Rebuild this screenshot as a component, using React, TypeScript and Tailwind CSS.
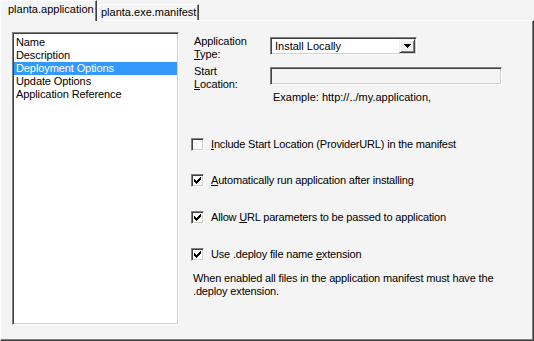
import React from "react";

function Check() {
  return (
    <svg width="7" height="7" viewBox="0 0 7 7" shapeRendering="crispEdges">
      <rect x="6" y="0" width="1" height="3" fill="#000" />
      <rect x="5" y="1" width="1" height="3" fill="#000" />
      <rect x="4" y="2" width="1" height="3" fill="#000" />
      <rect x="3" y="3" width="1" height="3" fill="#000" />
      <rect x="2" y="4" width="1" height="3" fill="#000" />
      <rect x="1" y="3" width="1" height="3" fill="#000" />
      <rect x="0" y="2" width="1" height="3" fill="#000" />
    </svg>
  );
}

function CheckBox({ checked }: { checked: boolean }) {
  return (
    <div className="w-[13px] h-[13px] shrink-0 border-t border-l border-[#808080] border-b border-r border-b-white border-r-white shadow-[inset_1px_1px_0_#404040,inset_-1px_-1px_0_#d4d0c8] bg-white flex items-center justify-center">
      {checked ? <Check /> : null}
    </div>
  );
}

function CheckRow({ checked, children, mt }: { checked: boolean; children: React.ReactNode; mt: string }) {
  return (
    <div className={`flex items-center h-[13px] ${mt}`}>
      <CheckBox checked={checked} />
      <span className="ml-[7px] whitespace-nowrap tracking-[-0.18px]">{children}</span>
    </div>
  );
}

export default function App() {
  const items = ["Name", "Description", "Deployment Options", "Update Options", "Application Reference"];
  return (
    <div className="w-[534px] h-[341px] bg-[#f4f4f4] font-['Liberation_Sans',Arial,sans-serif] text-[11px] leading-[13px] text-black overflow-hidden">
      <div className="flex items-end h-[20px]">
        <div className="relative z-10 -mb-px h-[21px] w-[97px] bg-[#f4f4f4] border-t border-l border-white border-r border-r-[#404040] shadow-[inset_-1px_0_0_#808080] pl-[7px] pt-[2px] whitespace-nowrap">
          planta.application
        </div>
        <div className="ml-[1px] h-[16px] w-[101px] border-t border-l border-white border-r border-r-[#404040] shadow-[inset_-1px_0_0_#808080] pl-[2px] pt-[1px] whitespace-nowrap">
          planta.exe.manifest
        </div>
      </div>
      <div className="h-[321px] border-t border-l border-white border-r border-b border-r-[#404040] border-b-[#404040] shadow-[inset_-1px_-1px_0_#808080] flex pl-[11px] pt-[11px]">
        <div className="w-[167px] h-[293px] bg-white border-t border-l border-[#808080] border-b border-r border-b-white border-r-white shadow-[inset_1px_1px_0_#404040,inset_-1px_-1px_0_#d4d0c8] p-[1px] pt-[2px]">
          <div className="pt-[1px] tracking-[-0.1px]">
            {items.map((it) => (
              <div
                key={it}
                className={`h-[13px] pl-[2px] whitespace-nowrap ${it === "Deployment Options" ? "bg-[#3399ff] text-white" : ""}`}
              >
                {it}
              </div>
            ))}
          </div>
        </div>
        <div className="ml-[12px] flex flex-col">
          <div className="flex mt-[3px]">
            <div className="w-[79px] pl-[3px] tracking-[-0.1px]">
              <div>Application</div>
              <div>
                <span className="underline">T</span>ype:
              </div>
            </div>
            <div className="mt-[2px] h-[18px] w-[147px] bg-white border-t border-l border-[#808080] border-b border-r border-b-white border-r-white shadow-[inset_1px_1px_0_#404040,inset_-1px_-1px_0_#d4d0c8] p-[1px] flex">
              <div className="flex-1 pl-[3px] pt-[1px] whitespace-nowrap">Install Locally</div>
              <div className="w-[16px] h-[14px] bg-[#f0f0f0] border-t border-l border-[#f0f0f0] border-b border-r border-b-[#404040] border-r-[#404040] shadow-[inset_1px_1px_0_#ffffff,inset_-1px_-1px_0_#808080] flex items-center justify-center">
                <svg width="7" height="4" viewBox="0 0 7 4" shapeRendering="crispEdges">
                  <path d="M0 0H7L3.5 4Z" fill="#000" />
                </svg>
              </div>
            </div>
          </div>
          <div className="flex mt-[4px]">
            <div className="w-[79px] pl-[3px] tracking-[-0.1px]">
              <div>Start</div>
              <div>
                <span className="underline">L</span>ocation:
              </div>
            </div>
            <div className="mt-[2px] h-[18px] w-[232px] bg-[#f4f4f4] border-t border-l border-[#808080] border-b border-r border-b-white border-r-white shadow-[inset_1px_1px_0_#404040,inset_-1px_-1px_0_#d4d0c8]" />
          </div>
          <div className="pl-[82px] whitespace-nowrap">Example: http://../my.application,</div>
          <CheckRow checked={false} mt="mt-[34px]">
            <span className="underline">I</span>nclude Start Location (ProviderURL) in the manifest
          </CheckRow>
          <CheckRow checked={true} mt="mt-[23px]">
            <span className="underline">A</span>utomatically run application after installing
          </CheckRow>
          <CheckRow checked={true} mt="mt-[24px]">
            Allow <span className="underline">U</span>RL parameters to be passed to application
          </CheckRow>
          <CheckRow checked={true} mt="mt-[24px]">
            Use .deploy file name <span className="underline">e</span>xtension
          </CheckRow>
          <div className="mt-[11px] pl-[2px] w-[320px] tracking-[-0.15px]">
            When enabled all files in the application manifest must have the .deploy extension.
          </div>
        </div>
      </div>
    </div>
  );
}
